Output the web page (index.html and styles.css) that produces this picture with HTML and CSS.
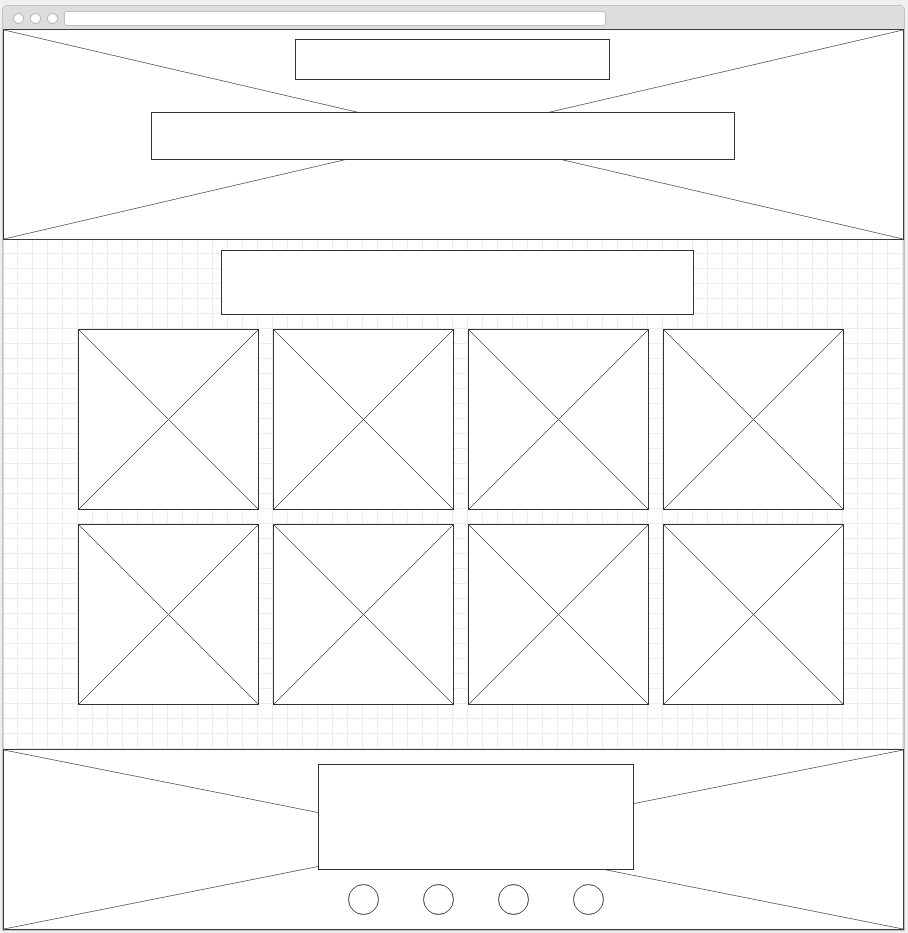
FILE: index.html
```html
<!DOCTYPE html>
<html>
<head>
<meta charset="utf-8">
<link rel="stylesheet" href="styles.css">
</head>
<body>
<div class="window">
  <div class="titlebar">
    <span class="dot"></span><span class="dot"></span><span class="dot"></span>
    <span class="url"></span>
  </div>
  <header class="hero xbg">
    <div class="box box-title"></div>
    <div class="box box-sub"></div>
  </header>
  <main class="middle">
    <div class="box box-heading"></div>
    <div class="cards">
      <div class="card xbg-card"></div>
      <div class="card xbg-card"></div>
      <div class="card xbg-card"></div>
      <div class="card xbg-card"></div>
      <div class="card xbg-card"></div>
      <div class="card xbg-card"></div>
      <div class="card xbg-card"></div>
      <div class="card xbg-card"></div>
    </div>
  </main>
  <footer class="foot xbg">
    <div class="box box-foot"></div>
    <div class="circles">
      <span class="circle"></span><span class="circle"></span><span class="circle"></span><span class="circle"></span>
    </div>
  </footer>
</div>
</body>
</html>
```

FILE: styles.css
```css
* { box-sizing: border-box; }
html, body { margin: 0; padding: 0; }
body {
  background: #efefef;
  width: 908px;
  height: 933px;
  overflow: hidden;
}
.window {
  margin: 5px 3px 0 2px;
  width: 903px;
  border: 1px solid #c4c4c4;
  border-radius: 5px 5px 0 0;
  background: #dddddd;
}
.titlebar {
  height: 23px;
  display: flex;
  align-items: center;
  gap: 6px;
  padding-left: 10px;
  padding-top: 2px;
}
.dot {
  width: 11px;
  height: 11px;
  border-radius: 50%;
  background: #fff;
  border: 1px solid #b0b0b0;
}
.url {
  width: 542px;
  height: 15px;
  background: #fff;
  border: 1px solid #bdbdbd;
  border-radius: 3px;
}
.xbg {
  background-color: #fff;
  background-image:
    linear-gradient(to top right, transparent calc(50% - 0.8px), #666 50%, transparent calc(50% + 0.8px)),
    linear-gradient(to bottom right, transparent calc(50% - 0.8px), #666 50%, transparent calc(50% + 0.8px));
}
.hero {
  height: 211px;
  border: 1px solid #3a3a3a;
  padding-top: 9px;
  display: flex;
  flex-direction: column;
}
.box {
  background: #fff;
  border: 1px solid #333;
}
.box-title {
  width: 315px;
  height: 41px;
  margin-left: 291px;
}
.box-sub {
  width: 584px;
  height: 48px;
  margin-left: 147px;
  margin-top: 32px;
}
.middle {
  height: 509px;
  border-left: 1px solid #cfcfcf;
  border-right: 1px solid #cfcfcf;
  background-color: #fff;
  background-image:
    linear-gradient(to right, #ececec 1px, transparent 1px),
    linear-gradient(to bottom, #ececec 1px, transparent 1px);
  background-size: 15px 15px;
  background-position: 13px 13px;
  padding-top: 10px;
  display: flex;
  flex-direction: column;
}
.box-heading {
  width: 473px;
  height: 65px;
  margin-left: 217px;
}
.cards {
  margin-top: 14px;
  margin-left: 74px;
  display: grid;
  grid-template-columns: repeat(4, 181px);
  grid-auto-rows: 181px;
  gap: 14px;
}
.card {
  border: 1px solid #333;
}
.xbg-card {
  background-color: #fff;
  background-image:
    linear-gradient(to top right, transparent calc(50% - 0.6px), #555 50%, transparent calc(50% + 0.6px)),
    linear-gradient(to bottom right, transparent calc(50% - 0.6px), #555 50%, transparent calc(50% + 0.6px));
}
.foot {
  height: 181px;
  border: 1px solid #3a3a3a;
  padding-top: 14px;
  display: flex;
  flex-direction: column;
}
.box-foot {
  width: 316px;
  height: 106px;
  margin-left: 314px;
}
.circles {
  margin-top: 14px;
  margin-left: 344px;
  display: flex;
  gap: 44px;
}
.circle {
  width: 31px;
  height: 31px;
  border-radius: 50%;
  border: 1px solid #444;
  background: #fff;
}
```
